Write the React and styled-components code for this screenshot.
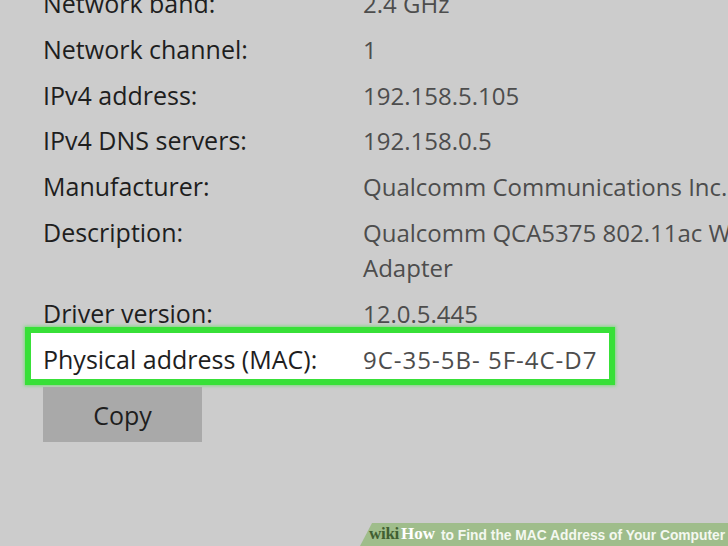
import React from "react";
import styled, { createGlobalStyle } from "styled-components";

const GlobalStyle = createGlobalStyle`
  html, body {
    margin: 0;
    padding: 0;
    width: 728px;
    height: 546px;
    overflow: hidden;
    background: #cccccc;
  }
`;

const Page = styled.div`
  position: relative;
  width: 728px;
  height: 546px;
  overflow: hidden;
  background: #cccccc;
  font-family: "Open Sans", "Noto Sans", sans-serif;
  font-size: 25px;
`;

const List = styled.div`
  display: flex;
  flex-direction: column;
  margin-top: -14px;
  padding-left: 43px;
`;

const Row = styled.div`
  display: flex;
  line-height: 35px;
  margin-bottom: 10.8px;
  white-space: nowrap;
`;

const Label = styled.div`
  width: 320px;
  flex-shrink: 0;
  color: #1e1e1e;
`;

const Value = styled.div`
  color: #4d4d4d;
  font-size: 24px;
  white-space: nowrap;
  letter-spacing: ${(p) => (p.$spaced ? "1px" : "0")};
`;

const Highlight = styled.div`
  display: flex;
  line-height: 35px;
  width: 590px;
  box-sizing: border-box;
  margin-top: -14.5px;
  margin-left: -18px;
  padding: 9px 0 2px 12px;
  border: 6px solid #38e038;
  box-shadow: 0 0 3px 1px rgba(70, 225, 70, 0.55);
  background: #ffffff;
  white-space: nowrap;
`;

const CopyButton = styled.div`
  display: flex;
  align-items: center;
  justify-content: center;
  width: 159px;
  height: 55px;
  margin-top: 2px;
  background: #a9a9a9;
  color: #1e1e1e;
`;

const Banner = styled.div`
  position: absolute;
  right: 0;
  bottom: 0;
  width: 368px;
  height: 23px;
  display: flex;
  align-items: flex-end;
  padding-left: 9px;
  padding-bottom: 2px;
  box-sizing: border-box;
  background: #9fbd8b;
  clip-path: polygon(12px 0, 100% 0, 100% 100%, 0 100%);
  white-space: nowrap;
`;

const Wiki = styled.span`
  font-family: "Liberation Serif", "DejaVu Serif", serif;
  font-weight: bold;
  font-size: 17px;
  color: #415f32;
  letter-spacing: -0.3px;
`;

const How = styled.span`
  font-family: "Liberation Serif", "DejaVu Serif", serif;
  font-weight: bold;
  font-size: 17px;
  color: #ffffff;
  margin-left: 2px;
`;

const Caption = styled.span`
  font-family: "Liberation Sans", Arial, sans-serif;
  font-weight: bold;
  font-size: 13.8px;
  color: #f4f8f0;
  margin-left: 6px;
  margin-bottom: 1px;
`;

const rows = [
  ["Network band:", "2.4 GHz"],
  ["Network channel:", "1"],
  ["IPv4 address:", "192.158.5.105"],
  ["IPv4 DNS servers:", "192.158.0.5"],
  ["Manufacturer:", "Qualcomm Communications Inc."],
  ["Description:", ["Qualcomm QCA5375 802.11ac Wireless", "Adapter"]],
  ["Driver version:", "12.0.5.445"],
];

export default function App() {
  return (
    <>
      <GlobalStyle />
      <Page>
        <List>
          {rows.map(([label, value]) => (
            <Row key={label}>
              <Label>{label}</Label>
              <Value>
                {Array.isArray(value)
                  ? value.map((line) => <div key={line}>{line}</div>)
                  : value}
              </Value>
            </Row>
          ))}
          <Highlight>
            <Label>Physical address (MAC):</Label>
            <Value $spaced>9C-35-5B- 5F-4C-D7</Value>
          </Highlight>
          <CopyButton>Copy</CopyButton>
        </List>
        <Banner>
          <Wiki>wiki</Wiki>
          <How>How</How>
          <Caption>to Find the MAC Address of Your Computer</Caption>
        </Banner>
      </Page>
    </>
  );
}
